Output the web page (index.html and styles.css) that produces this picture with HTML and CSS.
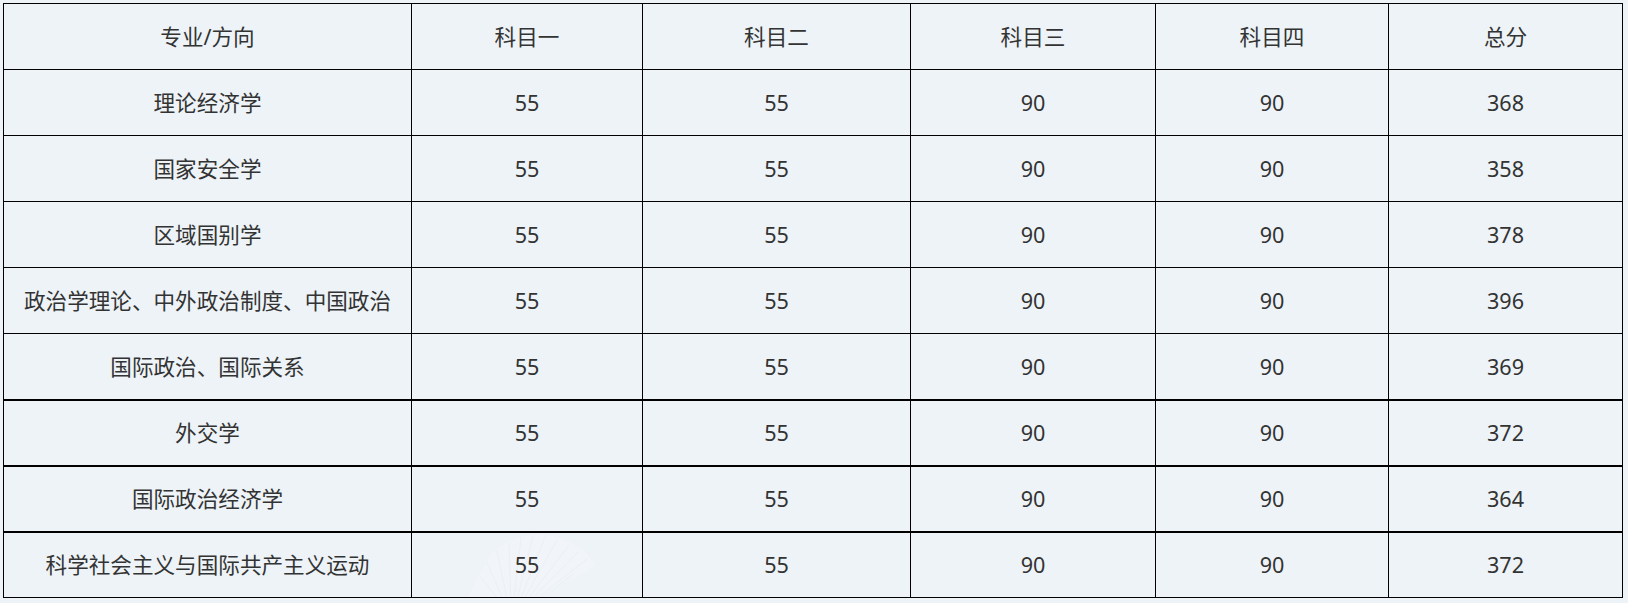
FILE: index.html
```html
<!DOCTYPE html>
<html lang="zh-CN">
<head>
<meta charset="utf-8">
<title>分数线</title>
<link rel="stylesheet" href="styles.css">
</head>
<body>
<div class="wrap">
  <svg class="leaf" viewBox="0 0 140 75" width="140" height="75" aria-hidden="true">
    <path class="leaf-fill" d="M0 75 C6 55 14 40 26 22 C36 8 60 0 80 2 C100 4 118 14 130 30 C126 40 110 44 96 50 C86 56 80 66 78 75 Z"/>
    <g class="leaf-veins">
      <path d="M40 75 L14 42"/><path d="M42 75 L22 30"/><path d="M44 75 L32 18"/>
      <path d="M46 75 L44 10"/><path d="M48 75 L56 5"/><path d="M50 75 L68 3"/>
      <path d="M52 75 L80 4"/><path d="M54 75 L92 7"/><path d="M56 75 L104 12"/>
      <path d="M58 75 L114 18"/><path d="M60 75 L122 26"/><path d="M62 75 L110 40"/>
    </g>
  </svg>
  <table class="score">
    <colgroup>
      <col class="c1"><col class="c2"><col class="c3"><col class="c4"><col class="c5"><col class="c6">
    </colgroup>
    <thead>
      <tr><th>专业/方向</th><th>科目一</th><th>科目二</th><th>科目三</th><th>科目四</th><th>总分</th></tr>
    </thead>
    <tbody>
      <tr><td>理论经济学</td><td>55</td><td>55</td><td>90</td><td>90</td><td>368</td></tr>
      <tr><td>国家安全学</td><td>55</td><td>55</td><td>90</td><td>90</td><td>358</td></tr>
      <tr><td>区域国别学</td><td>55</td><td>55</td><td>90</td><td>90</td><td>378</td></tr>
      <tr><td>政治学理论、中外政治制度、中国政治</td><td>55</td><td>55</td><td>90</td><td>90</td><td>396</td></tr>
      <tr><td>国际政治、国际关系</td><td>55</td><td>55</td><td>90</td><td>90</td><td>369</td></tr>
      <tr class="thick"><td>外交学</td><td>55</td><td>55</td><td>90</td><td>90</td><td>372</td></tr>
      <tr class="thick"><td>国际政治经济学</td><td>55</td><td>55</td><td>90</td><td>90</td><td>364</td></tr>
      <tr class="thick"><td>科学社会主义与国际共产主义运动</td><td>55</td><td>55</td><td>90</td><td>90</td><td>372</td></tr>
    </tbody>
  </table>
</div>
</body>
</html>
```
FILE: styles.css
```css
html, body {
  background: #eef3f8;
}
body {
  margin: 3px;
  font-family: "Noto Sans", "Noto Sans CJK SC", sans-serif;
  color: #333;
}
.wrap {
  position: relative;
  width: 1619px;
}
.leaf {
  position: absolute;
  left: 462px;
  top: 530px;
  z-index: 0;
}
.leaf-fill {
  fill: #f1f4f8;
}
.leaf-veins path {
  stroke: #e8ecf0;
  stroke-width: 0.6;
  fill: none;
}
.score {
  position: relative;
  z-index: 1;
  border-collapse: collapse;
  table-layout: fixed;
  width: 1619px;
}
.c1 { width: 408px; }
.c2 { width: 231px; }
.c3 { width: 268px; }
.c4 { width: 245px; }
.c5 { width: 233px; }
.c6 { width: 234px; }
.score th,
.score td {
  border: 1px solid #000;
  height: 65px;
  padding: 0;
  text-align: center;
  vertical-align: middle;
  font-size: 21.6px;
  font-weight: normal;
  line-height: 1.2;
  white-space: nowrap;
}
.score tr.thick td {
  box-shadow: inset 0 1px 0 #000;
}
```
